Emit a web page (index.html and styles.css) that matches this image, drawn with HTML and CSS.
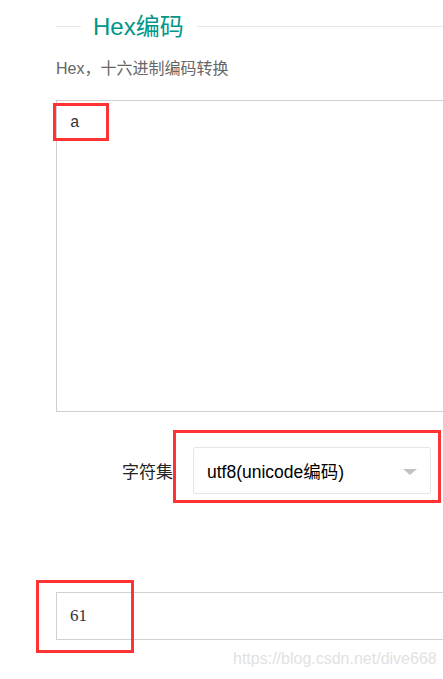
FILE: index.html
```html
<!DOCTYPE html>
<html lang="zh">
<head>
    <meta charset="UTF-8">
    <meta name="viewport" content="width=device-width, initial-scale=1.0">
    <title>Hex编码</title>
    <link rel="stylesheet" href="styles.css">
</head>
<body>
    <div class="page">
        <div class="field-title">
            <span class="line short"></span>
            <span class="legend">Hex编码</span>
            <span class="line"></span>
        </div>
        <p class="desc">Hex，十六进制编码转换</p>
        <div class="input-wrap">
            <div class="textarea">a</div>
            <div class="mark mark-input"></div>
        </div>
        <div class="form-row">
            <label class="form-label">字符集</label>
            <div class="select-wrap">
                <div class="select">
                    <span>utf8(unicode编码)</span>
                    <span class="arrow"></span>
                </div>
                <div class="mark mark-select"></div>
            </div>
        </div>
        <div class="output-wrap">
            <div class="output">61</div>
            <div class="mark mark-output"></div>
        </div>
        <div class="watermark">https://blog.csdn.net/dive668</div>
    </div>
</body>
</html>
```
FILE: styles.css
```css
body {
    margin: 0;
    background-color: white;
    font-family: "Liberation Sans", "Noto Sans CJK SC", sans-serif;
    overflow: hidden;
}
.page {
    position: relative;
    width: 700px;
    height: 679px;
    padding-left: 56px;
    box-sizing: border-box;
}
.field-title {
    display: flex;
    align-items: center;
    height: 52px;
    width: 387px;
}
.line {
    flex: 1;
    height: 1px;
    background-color: #e6e6e6;
}
.line.short {
    flex: none;
    width: 25px;
}
.legend {
    padding: 2px 13px 0 12px;
    font-size: 24px;
    color: #009688;
    line-height: 30px;
}
.desc {
    margin: 5px 0 0;
    font-size: 16px;
    line-height: 24px;
    color: #666;
}
.input-wrap {
    position: relative;
    margin-top: 19px;
}
.textarea {
    width: 600px;
    height: 312px;
    box-sizing: border-box;
    border: 1px solid #cfcfcf;
    padding: 12px 13px;
    font-family: "Liberation Mono", monospace;
    font-size: 16px;
    line-height: 20px;
    color: #333;
}
.mark {
    position: absolute;
    border: 3px solid #f33;
    box-sizing: border-box;
}
.mark-input {
    left: -3px;
    top: 3px;
    width: 56px;
    height: 38px;
}
.form-row {
    display: flex;
    align-items: center;
    margin-top: 35px;
}
.form-label {
    width: 117px;
    text-align: right;
    font-size: 17px;
    color: #222;
    font-family: "Noto Sans CJK SC", sans-serif;
}
.select-wrap {
    position: relative;
    margin-left: 20px;
}
.select {
    display: flex;
    align-items: center;
    justify-content: space-between;
    width: 238px;
    height: 47px;
    box-sizing: border-box;
    border: 1px solid #e6e6e6;
    border-radius: 2px;
    padding: 0 13px;
    font-size: 17.5px;
    color: #000;
}
.arrow {
    width: 0;
    height: 0;
    border-left: 7px solid transparent;
    border-right: 7px solid transparent;
    border-top: 6px solid #c2c2c2;
    margin-top: 2px;
}
.mark-select {
    left: -20px;
    top: -17px;
    width: 268px;
    height: 73px;
}
.output-wrap {
    position: relative;
    margin-top: 98px;
}
.output {
    width: 600px;
    height: 48px;
    box-sizing: border-box;
    border: 1px solid #d2d2d2;
    padding: 0 13px;
    display: flex;
    align-items: center;
    font-family: "Liberation Serif", serif;
    font-size: 17px;
    color: #333;
}
.mark-output {
    left: -20px;
    top: -12px;
    width: 98px;
    height: 73px;
}
.watermark {
    position: absolute;
    left: 233px;
    top: 650px;
    font-size: 16px;
    color: #e2e2e2;
    white-space: nowrap;
}
```
